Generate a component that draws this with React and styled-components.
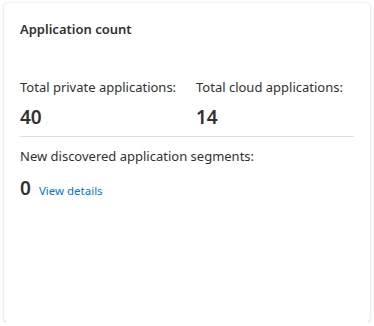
import React from "react";
import styled, { createGlobalStyle } from "styled-components";

const Global = createGlobalStyle`
  body {
    margin: 0;
    background: #ffffff;
    font-family: "Noto Sans", "Open Sans", sans-serif;
  }
`;

const Card = styled.div`
  box-sizing: border-box;
  width: 366px;
  height: 319px;
  margin: 3px 0 0 4px;
  padding: 16px 16px 16px;
  background: #fff;
  border-radius: 4px;
  box-shadow: 0 0.6px 1.8px rgba(0, 0, 0, 0.13), 0 1.6px 3.6px rgba(0, 0, 0, 0.11);
  color: #323130;
`;

const Title = styled.h2`
  margin: 0;
  font-size: 13px;
  font-weight: 600;
  line-height: 20px;
`;

const Stats = styled.div`
  display: grid;
  grid-template-columns: 176px 1fr;
  margin-top: 38px;
  padding-bottom: 6px;
  border-bottom: 1px solid #e1dfdd;
`;

const Stat = styled.div`
  display: flex;
  flex-direction: column;
  gap: 7px;
`;

const Label = styled.div`
  font-size: 13px;
  line-height: 20px;
`;

const Value = styled.div`
  font-size: 19px;
  font-weight: 600;
  line-height: 26px;
`;

const Section = styled.div`
  margin-top: 9px;
  display: flex;
  flex-direction: column;
  gap: 9px;
`;

const Row = styled.div`
  display: flex;
  align-items: baseline;
  gap: 8px;
`;

const Link = styled.a`
  font-size: 11.5px;
  color: #0078d4;
  text-decoration: none;
  cursor: pointer;
`;

export default function App() {
  return (
    <>
      <Global />
      <Card>
        <Title>Application count</Title>
        <Stats>
          <Stat>
            <Label>Total private applications:</Label>
            <Value>40</Value>
          </Stat>
          <Stat>
            <Label>Total cloud applications:</Label>
            <Value>14</Value>
          </Stat>
        </Stats>
        <Section>
          <Label>New discovered application segments:</Label>
          <Row>
            <Value>0</Value>
            <Link>View details</Link>
          </Row>
        </Section>
      </Card>
    </>
  );
}
